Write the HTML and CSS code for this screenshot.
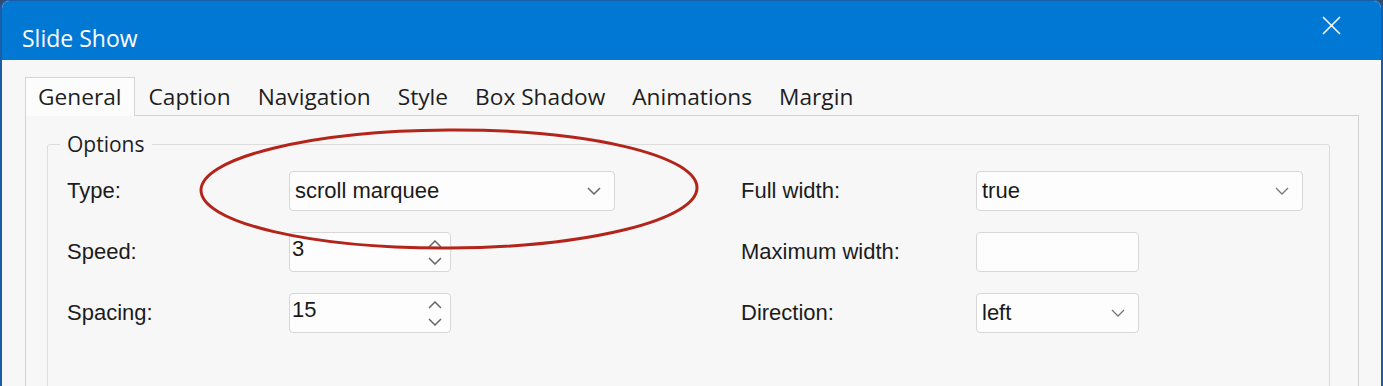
FILE: index.html
```html
<!DOCTYPE html>
<html lang="en">
<head>
  <meta charset="UTF-8">
  <title>Slide Show</title>
  <link rel="stylesheet" href="styles.css">
</head>
<body>
  <div class="window">
    <!-- Title bar -->
    <div class="titlebar">
      <span class="title">Slide Show</span>
      <svg class="close" width="19" height="19" viewBox="0 0 19 19">
        <path d="M1 1L18 18M18 1L1 18" stroke="#fff" stroke-width="1.6" fill="none"/>
      </svg>
    </div>

    <div class="content">
      <!-- Tabs -->
      <div class="tabs">
        <span class="tab active">General</span>
        <span class="tab">Caption</span>
        <span class="tab">Navigation</span>
        <span class="tab">Style</span>
        <span class="tab">Box Shadow</span>
        <span class="tab">Animations</span>
        <span class="tab">Margin</span>
      </div>

      <div class="panel">
        <fieldset class="options">
          <legend>Options</legend>
          <div class="grid">
            <span class="label">Type:</span>
            <div class="field select w-type">
              <span>scroll marquee</span>
              <svg class="chev" width="14" height="8" viewBox="0 0 14 8"><path d="M1 1L7 7L13 1" stroke="#666" stroke-width="1.5" fill="none"/></svg>
            </div>
            <span class="label">Full width:</span>
            <div class="field select w-full">
              <span>true</span>
              <svg class="chev" width="14" height="8" viewBox="0 0 14 8"><path d="M1 1L7 7L13 1" stroke="#777" stroke-width="1.3" fill="none"/></svg>
            </div>

            <span class="label">Speed:</span>
            <div class="field spin">
              <span>3</span>
              <div class="arrows">
                <svg width="14" height="8" viewBox="0 0 14 8"><path d="M1 7L7 1L13 7" stroke="#666" stroke-width="1.5" fill="none"/></svg>
                <svg width="14" height="8" viewBox="0 0 14 8"><path d="M1 1L7 7L13 1" stroke="#666" stroke-width="1.5" fill="none"/></svg>
              </div>
            </div>
            <span class="label">Maximum width:</span>
            <div class="field w-small"></div>

            <span class="label">Spacing:</span>
            <div class="field spin">
              <span>15</span>
              <div class="arrows">
                <svg width="14" height="8" viewBox="0 0 14 8"><path d="M1 7L7 1L13 7" stroke="#666" stroke-width="1.5" fill="none"/></svg>
                <svg width="14" height="8" viewBox="0 0 14 8"><path d="M1 1L7 7L13 1" stroke="#666" stroke-width="1.5" fill="none"/></svg>
              </div>
            </div>
            <span class="label">Direction:</span>
            <div class="field select w-small">
              <span>left</span>
              <svg class="chev" width="14" height="8" viewBox="0 0 14 8"><path d="M1 1L7 7L13 1" stroke="#777" stroke-width="1.3" fill="none"/></svg>
            </div>
          </div>
        </fieldset>
      </div>
    </div>

    <!-- Red annotation ring -->
    <svg class="ring" width="510" height="130" viewBox="0 0 510 130">
      <ellipse cx="253" cy="64" rx="248" ry="59" transform="rotate(-0.3 253 64)" stroke="#b3241a" stroke-width="3" fill="none"/>
    </svg>
  </div>
</body>
</html>
```

FILE: styles.css
```css
body {
  margin: 0;
  height: 386px;
  overflow: hidden;
  background-color: #2f4b72;
}
.window {
  position: relative;
  box-sizing: border-box;
  height: 386px;
  border: 2px solid #1b5ea8;
  border-top-width: 1px;
  border-bottom: none;
  border-radius: 9px 9px 0 0;
  background-color: #f7f7f7;
  overflow: hidden;
}
.titlebar {
  display: flex;
  justify-content: space-between;
  align-items: flex-start;
  height: 59px;
  padding-left: 20px;
  background-color: #0078d4;
}
.title {
  margin-top: 21px;
  font: 23px/32px "Open Sans", sans-serif;
  color: #fff;
}
.close {
  margin: 15px 40px 0 0;
}
.content {
  padding: 17px 22px 0 23px;
}
/* Tabs */
.tabs {
  display: flex;
}
.tab {
  position: relative;
  z-index: 1;
  margin: 0 1px -1px 0;
  padding: 3px 12px 3px;
  border: 1px solid transparent;
  border-bottom: none;
  font: 22.7px/32px "Open Sans", sans-serif;
  color: #1e1e1e;
}
.tab.active {
  background-color: #fcfcfc;
  border-color: #d6d6d6;
}
.panel {
  height: 400px;
  padding: 14px 28px 0 21px;
  border: 1px solid #d3d3d3;
  border-bottom: none;
}
/* Options group */
.options {
  min-width: 0;
  height: 360px;
  margin: 0;
  padding: 0 0 0 19px;
  border: 1px solid #dddddd;
  border-radius: 3px;
}
.options legend {
  margin-left: -7px;
  padding: 0 7px;
  font: 21px/28px "Open Sans", sans-serif;
  color: #1e1e1e;
}
.grid {
  display: grid;
  grid-template-columns: 222px 452px 235px auto;
  grid-template-rows: 40px 40px 40px;
  row-gap: 21px;
  align-items: center;
  margin-top: 13px;
  font: 22px "Liberation Sans", Arial, sans-serif;
  color: #1c1c1c;
}
.field {
  box-sizing: border-box;
  display: flex;
  align-items: center;
  height: 40px;
  padding: 0 13px 0 5px;
  border: 1px solid #d7d7d7;
  border-radius: 4px;
  background-color: #fdfdfd;
  color: #1a1a1a;
}
.select {
  justify-content: space-between;
}
.w-type {
  width: 326px;
}
.w-full {
  width: 327px;
}
.w-small {
  width: 163px;
}
.spin {
  width: 162px;
  justify-content: space-between;
  align-items: flex-start;
  padding: 3px 8px 0 2px;
}
.arrows {
  display: flex;
  flex-direction: column;
  gap: 9px;
  padding-top: 4px;
}
.arrows svg {
  display: block;
}
/* Annotation */
.ring {
  position: absolute;
  left: 194px;
  top: 124px;
  pointer-events: none;
}
```
